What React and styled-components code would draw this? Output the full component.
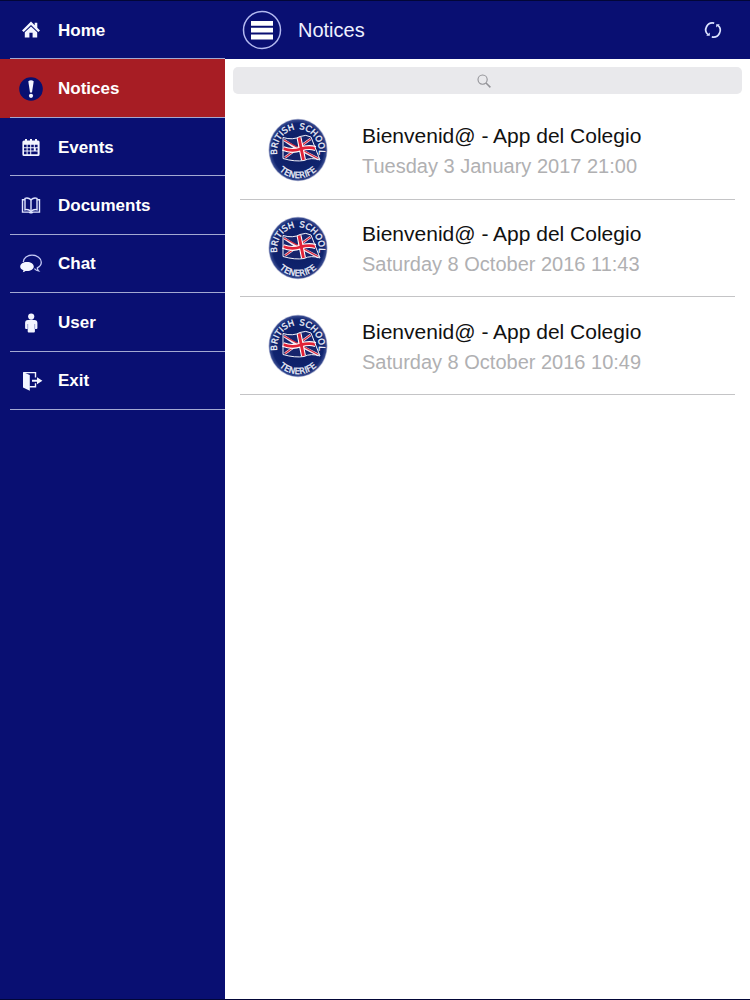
import React, { useState } from "react";
import styled, { createGlobalStyle } from "styled-components";

const GlobalStyle = createGlobalStyle`
  * {
    box-sizing: border-box;
  }

  body {
    margin: 0;
    background-color: #fff;
    font-family: "Liberation Sans", Arial, sans-serif;
  }
`;

const Screen = styled.div`
  display: flex;
  min-height: 100vh;
  border-top: 1px solid #020637;
  border-bottom: 1px solid #020637;
`;

const Sidebar = styled.nav`
  flex: 0 0 30%;
  background-color: #090f72;
`;

const Menu = styled.ul`
  display: grid;
  grid-auto-rows: 1fr;
  height: 409px;
  margin: 0;
  padding: 0;
  list-style: none;
`;

const MenuItem = styled.li`
  display: flex;
  background-color: ${(props) => (props.$active ? "#a71d24" : "transparent")};
`;

const MenuLink = styled.a`
  display: flex;
  flex: 1;
  align-items: center;
  gap: 14px;
  margin-left: 10px;
  padding: 2px 0 0 8px;
  border-bottom: 1px solid #a3a9d2;
  color: #fff;
  font-size: 17px;
  font-weight: bold;
  text-decoration: none;
`;

const MenuIcon = styled.svg`
  width: 26px;
  height: 26px;
  fill: #f3f5ff;
`;

const Main = styled.main`
  flex: 1;
  min-width: 0;
`;

const Header = styled.header`
  display: flex;
  align-items: center;
  height: 58px;
  padding: 0 26px 0 17px;
  background-color: #090f72;
  color: #eef1ff;
`;

const IconButton = styled.button`
  display: flex;
  padding: 0;
  border: 0;
  background: none;
  color: inherit;
  cursor: pointer;
`;

const Title = styled.h1`
  flex: 1;
  margin: 0 0 0 16px;
  font-size: 20px;
  font-weight: normal;
`;

const SearchBar = styled.label`
  display: flex;
  align-items: center;
  justify-content: center;
  height: 27px;
  margin: 8px;
  border-radius: 5px;
  background-color: #e9e9ec;
  cursor: text;
`;

const SearchInput = styled.input`
  width: 8px;
  padding: 0;
  border: 0;
  outline: 0;
  background: none;
  font: inherit;

  &:focus,
  &:not(:placeholder-shown) {
    width: 60%;
  }
`;

const NoticeList = styled.ul`
  display: grid;
  grid-template-rows: repeat(3, 1fr);
  height: 293px;
  margin: 0 15px;
  padding: 0;
  list-style: none;
`;

const Notice = styled.li`
  display: flex;
  align-items: center;
  gap: 34px;
  padding-left: 28px;
  border-bottom: 1px solid #c4c4c6;
`;

const NoticeText = styled.div`
  padding-top: 2px;
`;

const NoticeTitle = styled.h2`
  margin: 0;
  color: #111;
  font-size: 21px;
  font-weight: normal;
  line-height: 30px;
`;

const NoticeDate = styled.p`
  margin: 0;
  color: #b0b0b2;
  font-size: 20px;
  line-height: 30px;
`;

const icons = {
  home: (
    <>
      <path d="M13 3.6 4 12.4l1.7 1.7L13 7l7.3 7.1 1.7-1.7-2.7-2.6V4.8h-2.6v2.400z" />
      <path d="M13 8.4 6.8 14.2V19.6h4.6v-4.8h3.2v4.8h4.6v-5.400z" />
    </>
  ),
  notices: (
    <>
      <circle cx="13" cy="13" r="11.8" fill="#080f70" />
      <path d="M10.3 5.2Q13 3.4 15.7 5.2L14 16.6h-2z" />
      <circle cx="13" cy="19.8" r="2.1" />
    </>
  ),
  events: (
    <path
      fillRule="evenodd"
      d="M7 4h2v1.4h3V4h2v1.4h3V4h2v1.4h1q1.6 0 1.6 1.6v12.4q0 1.6-1.6 1.6H6q-1.6 0-1.6-1.6V7Q4.4 5.4 6 5.4h1zM6 9.8h2.600v2.400H6zM9.600 9.800h2.600v2.400h-2.600zM13.200 9.800h2.600v2.400h-2.600zM16.800 9.800h2.800v2.400h-2.800zM6 13.200h2.600v2.400H6zM9.600 13.200h2.600v2.400h-2.600zM13.200 13.200h2.600v2.400h-2.600zM17.800 13.200h1.800v2.400h-1.800zM6 16.600h2.600v2.600H6zM9.600 16.600h2.600v2.600h-2.600zM13.200 16.600h6.400v2.600h-6.400z"
    />
  ),
  documents: (
    <g fill="none" stroke="#e0e5ff" strokeWidth="1.4">
      <path d="M13 6.8Q10.3 4.3 7 5.4v11.4q3.300-1 6 1.700 2.700-2.700 6-1.700V5.400q-3.300-1.100-6 1.400z" />
      <path d="M13 7v11.500" />
      <path d="M6.800 6.700H4.500v12.400h6.700q1.800 1.400 3.600 0h6.700V6.700h-2.300" />
    </g>
  ),
  chat: (
    <>
      <path
        fill="none"
        stroke="#c5caf5"
        strokeWidth="1.3"
        d="M5.3 11C5.5 7 9.4 4.2 14 4.2c5 0 9.3 3 9.3 7 0 2.5-1.7 4.5-4 5.7.1 1.3.6 2.3 1.3 3-2-.2-3.3-1.3-4.2-2.3"
      />
      <path d="M9 10.9c3.9 0 6.8 2 6.8 4.6s-2.9 4.6-6.8 4.6l-1.500-.1q-1 1.100-2.800 1.200.8-.8.700-2Q2.200 18 2.200 15.500c0-2.600 2.900-4.600 6.800-4.600z" />
    </>
  ),
  user: (
    <>
      <circle cx="13.2" cy="6.6" r="3.1" />
      <path d="M10 9.9h6.4q3 0 3 3v5.2q0 1-1 1h-1.500v2.400q0 1-1 1h-5.200q-1 0-1-1v-2.400H8.100q-1 0-1-1v-5.200q0-3 2.900-3z" />
      <path d="M9.700 14v5M16.700 14v5" stroke="#7d84c0" strokeWidth=".7" />
    </>
  ),
  exit: (
    <>
      <path d="M5 4l6.8 3v15.800L5 19.600z" />
      <path
        d="M5.500 4.600h12v4.900M11.500 18.800h6v-3.500"
        fill="none"
        stroke="#f3f5ff"
        strokeWidth="1.4"
      />
      <path d="M14 11.700h5V9.200l5.400 3.500-5.400 3.500v-2.500h-5z" />
    </>
  ),
};

const menuItems = [
  { id: "home", label: "Home" },
  { id: "notices", label: "Notices" },
  { id: "events", label: "Events" },
  { id: "documents", label: "Documents" },
  { id: "chat", label: "Chat" },
  { id: "user", label: "User" },
  { id: "exit", label: "Exit" },
];

const notices = [
  { id: 1, title: "Bienvenid@ - App del Colegio", date: "Tuesday 3 January 2017 21:00" },
  { id: 2, title: "Bienvenid@ - App del Colegio", date: "Saturday 8 October 2016 11:43" },
  { id: 3, title: "Bienvenid@ - App del Colegio", date: "Saturday 8 October 2016 10:49" },
];

function SchoolLogo({ id }) {
  return (
    <svg width="60" height="64" viewBox="0 0 60 64" aria-hidden="true">
      <defs>
        <path id={`top-${id}`} d="M9.5 38A21 22 0 1 1 50.5 38" />
        <path id={`bottom-${id}`} d="M5 44A27.5 27.5 0 0 0 55 44" />
        <radialGradient id={`disc-${id}`}>
          <stop offset="0" stopColor="#0b1c62" />
          <stop offset=".88" stopColor="#10246f" />
          <stop offset="1" stopColor="#3c4f93" />
        </radialGradient>
      </defs>
      <ellipse cx="30" cy="32" rx="29.5" ry="31.2" fill="#b4b9d4" />
      <ellipse cx="30" cy="32" rx="28.8" ry="30.5" fill={`url(#disc-${id})`} />
      <g
        fill="#eef0fa"
        stroke="#eef0fa"
        strokeWidth=".3"
        fontFamily="DejaVu Sans, sans-serif"
        fontSize="8.5"
      >
        <text>
          <textPath href={`#top-${id}`} startOffset="2%">
            BRITISH
          </textPath>
        </text>
        <text textAnchor="end">
          <textPath href={`#top-${id}`} startOffset="98%">
            SCHOOL
          </textPath>
        </text>
        <text textAnchor="middle">
          <textPath href={`#bottom-${id}`} startOffset="50%">
            TENERIFE
          </textPath>
        </text>
      </g>
      <path d="M15 19.5q10 3 17-1 6-2.500 11 .5l9 23q-9-3-16 .5-9 1.500-21-2z" fill="#17246c" />
      <path d="M16 22l13 9M42.500 21L17 39.500M29 30l21.500 11" stroke="#f5e9f0" strokeWidth="2.6" />
      <path d="M16 22l34 18.500M42.500 21L17 39.500" stroke="#d92b40" strokeWidth="1.4" />
      <g fill="none">
        <path d="M31 19.500l4.500 22.500M15 30.500q9 3.500 17.500.5 8-2.500 15-.5" stroke="#fff" strokeWidth="5" />
        <path d="M31 19.500l4.500 22.500M15 30.500q9 3.500 17.500.5 8-2.500 15-.5" stroke="#e12237" strokeWidth="2.9" />
        <path d="M15 19.500q10 3 17-1 6-2.500 11 .5l9 23q-9-3-16 .5-9 1.500-21-2z" stroke="#f3f3fb" />
      </g>
    </svg>
  );
}

function App() {
  const [active, setActive] = useState("notices");
  const [query, setQuery] = useState("");

  const visible = notices.filter((notice) =>
    notice.title.toLowerCase().includes(query.toLowerCase())
  );

  return (
    <Screen>
      <GlobalStyle />
      <Sidebar>
        <Menu>
          {menuItems.map(({ id, label }) => (
            <MenuItem key={id} $active={id === active}>
              <MenuLink href={`#${id}`} onClick={() => setActive(id)}>
                <MenuIcon viewBox="0 0 26 26" aria-hidden="true">
                  {icons[id]}
                </MenuIcon>
                {label}
              </MenuLink>
            </MenuItem>
          ))}
        </Menu>
      </Sidebar>
      <Main>
        <Header>
          <IconButton type="button" aria-label="Menu">
            <svg width="40" height="40" viewBox="0 0 40 40">
              <circle cx="20" cy="20" r="18.5" fill="none" stroke="#b3b9f0" strokeWidth="1.5" />
              <path d="M9 11h22v4.8H9zM9 17.8h22v4.6H9zM9 24.6h22v4.8H9z" fill="#fff" />
            </svg>
          </IconButton>
          <Title>Notices</Title>
          <IconButton type="button" aria-label="Refresh">
            <svg width="22" height="22" viewBox="0 0 22 22" fill="none" stroke="#dbe3ff">
              <path d="M12.2 4.1A6.8 6.8 0 0 0 6 15.7M9.8 17.9A6.8 6.8 0 0 0 16 6.3" strokeWidth="1.7" />
              <path d="M4.2 16.8h3.6v-3.400zM17.8 5.2h-3.6v3.400z" fill="#dbe3ff" stroke="none" />
            </svg>
          </IconButton>
        </Header>
        <SearchBar>
          <svg width="14" height="14" viewBox="0 0 14 14" fill="none" stroke="#929297" aria-hidden="true">
            <circle cx="5.6" cy="5.6" r="4.6" strokeWidth="1.1" />
            <path d="M9 9l4.4 4.4" strokeWidth="1.5" />
          </svg>
          <SearchInput
            type="text"
            aria-label="Search notices"
            placeholder=" "
            value={query}
            onChange={(e) => setQuery(e.target.value)}
          />
        </SearchBar>
        <NoticeList>
          {visible.map((notice) => (
            <Notice key={notice.id}>
              <SchoolLogo id={notice.id} />
              <NoticeText>
                <NoticeTitle>{notice.title}</NoticeTitle>
                <NoticeDate>{notice.date}</NoticeDate>
              </NoticeText>
            </Notice>
          ))}
        </NoticeList>
      </Main>
    </Screen>
  );
}

export default App;
